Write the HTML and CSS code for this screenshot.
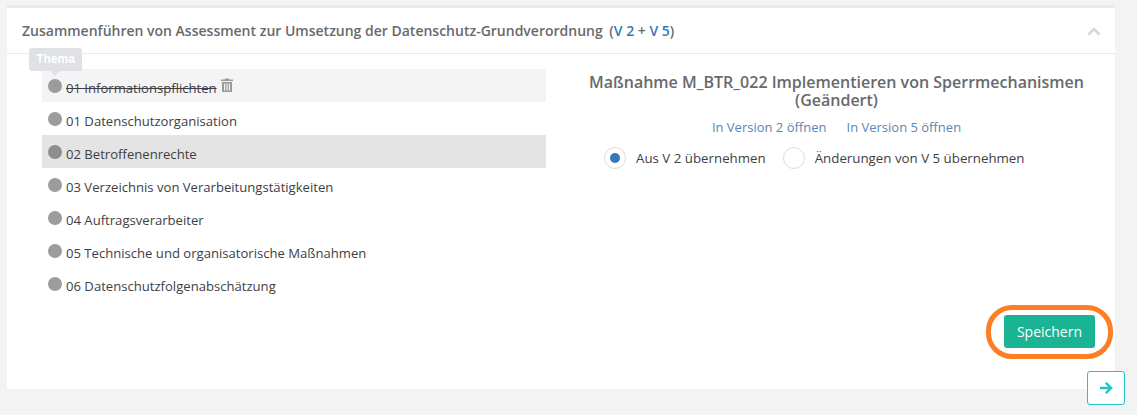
FILE: index.html
```html
<!DOCTYPE html>
<html lang="de">
<head>
<meta charset="utf-8">
<title>Zusammenführen von Assessment</title>
<link rel="stylesheet" href="styles.css">
</head>
<body>
<div class="card">
	<div class="card-head">
		<h5>Zusammenführen von Assessment zur Umsetzung der Datenschutz-Grundverordnung <span class="versions">(<b>V 2</b> + <b>V 5</b>)</span></h5>
		<svg class="collapse" width="14" height="9" viewBox="0 0 14 9"><path d="M1.5 7.5 7 2l5.5 5.5" fill="none" stroke="#d4d6d8" stroke-width="2.6"/></svg>
	</div>
	<div class="card-body">
		<ul class="topics">
			<li class="topic deleted">
				<span class="dot"></span><span class="name">01 Informationspflichten</span>
				<svg class="trash" width="12" height="14" viewBox="0 0 12 14"><path d="M4 1.5V.5h4v1h4v1.5H0V1.500zM1 4h10v10H1zM3 5.500v7h1.200v-7zM5.400 5.500v7h1.200v-7zM7.800 5.500v7H9v-7z" fill="#9a9a9a" fill-rule="evenodd"/></svg>
				<div class="tip">Thema</div>
			</li>
			<li class="topic"><span class="dot"></span><span class="name">01 Datenschutzorganisation</span></li>
			<li class="topic active"><span class="dot"></span><span class="name">02 Betroffenenrechte</span></li>
			<li class="topic"><span class="dot"></span><span class="name">03 Verzeichnis von Verarbeitungstätigkeiten</span></li>
			<li class="topic"><span class="dot"></span><span class="name">04 Auftragsverarbeiter</span></li>
			<li class="topic"><span class="dot"></span><span class="name">05 Technische und organisatorische Maßnahmen</span></li>
			<li class="topic"><span class="dot"></span><span class="name">06 Datenschutzfolgenabschätzung</span></li>
		</ul>
		<div class="detail">
			<h3>Maßnahme M_BTR_022 Implementieren von Sperrmechanismen (Geändert)</h3>
			<div class="links"><a href="#">In Version 2 öffnen</a><a href="#">In Version 5 öffnen</a></div>
			<div class="choices">
				<label class="choice"><span class="radio on"></span>Aus V 2 übernehmen</label>
				<label class="choice"><span class="radio"></span>Änderungen von V 5 übernehmen</label>
			</div>
		</div>
	</div>
	<div class="card-foot">
		<button class="save">Speichern</button>
		<span class="ring"></span>
	</div>
</div>
<button class="next">
	<svg width="14" height="12" viewBox="0 0 14 12"><path d="M1 6h11M6.800 .8 12.200 6l-5.400 5.200" fill="none" stroke="#23c6c8" stroke-width="2.400"/></svg>
</button>
</body>
</html>
```
FILE: styles.css
```css
html, body { margin:0; height:100%; overflow:hidden;}
body { background:#f3f3f4; font-family:"Open Sans", "Noto Sans", sans-serif; font-size:13.1px; color:#3e3e44; padding:5px 22px 0 7px; box-sizing:border-box; position:relative;}
.card { background:#fff; border-top:3px solid #e7eaec; height:384px; box-sizing:border-box; display:flex; flex-direction:column;}
.card-head { height:46px; box-sizing:border-box; border-bottom:1px solid #e7eaec; padding:0 14px 0 15px; display:flex; align-items:center; justify-content:space-between;}
.card-head h5 { margin:0; font-size:14px; font-weight:600; color:#676a6c;}
.versions { margin-left:3px; color:#676a6c;}
.versions b { font-weight:600; color:#337ab7;}
.collapse { margin-top:2px;}
.card-body { flex:1; display:flex; padding:15px 0 0 35px;}
.topics { list-style:none; margin:0; padding:0; width:504px; flex:none;}
.topic { height:33px; box-sizing:border-box; padding:10px 0 0 6px; display:flex; align-items:flex-start; position:relative; line-height:18px;}
.topic.deleted { background:#f4f4f4;}
.topic.deleted .name { text-decoration:line-through;}
.topic.active { background:#e4e4e4;}
.dot { width:14px; height:14px; border-radius:50%; background:#9c9c9c; margin:0 4px 0 0; flex:none;}
.topic.active .dot { background:#8e8e8e;}
.name { position:relative; top:0;}
.trash { margin:-1px 0 0 4px;}
.tip { position:absolute; left:-13px; top:-21px; width:53px; height:23px; background:#dfe1e5; border-radius:3px; color:#fff; font-family:"Liberation Sans", sans-serif; font-size:12px; font-weight:700; text-align:center; line-height:22px;}
.tip:after { content:""; position:absolute; left:21px; top:23px; border:5px solid transparent; border-top-color:#dfe1e5; border-bottom:0;}
.detail { flex:1; margin-left:12px; text-align:center;}
.detail h3 { margin:4px 0 0; font-size:16px; line-height:18px; font-weight:600; color:#676a6c;}
.links { margin-top:9px; font-size:13px; line-height:18px; display:flex; justify-content:center; gap:20px;}
.links a { color:#5b86b5; text-decoration:none;}
.choices { margin-top:11px; padding-left:46px; display:flex; align-items:center; font-size:13.3px;}
.choice { display:flex; align-items:center; margin-right:17px; line-height:22px;}
.radio { width:20px; height:20px; border:1px solid #dcdcdc; border-radius:50%; margin-right:10px; flex:none; position:relative; background:#fff;}
.radio.on:after { content:""; position:absolute; left:5px; top:5px; width:10px; height:10px; border-radius:50%; background:#337ab7;}
.card-foot { display:flex; justify-content:flex-end; padding:0 20px 41px 0; position:relative;}
.save { width:91px; height:33px; background:#1ab394; border:0; border-radius:3px; color:#fff; font:14px "Open Sans", sans-serif; padding:0;}
.ring { position:absolute; right:2px; top:-10px; width:127px; height:54px; box-sizing:border-box; border:5px solid #fd7e24; border-radius:26px;}
.next { position:absolute; left:1087px; top:371px; width:38px; height:34px; padding:0; background:#fff; border:1px solid #23c6c8; border-radius:3px; display:flex; align-items:center; justify-content:center;}
```
